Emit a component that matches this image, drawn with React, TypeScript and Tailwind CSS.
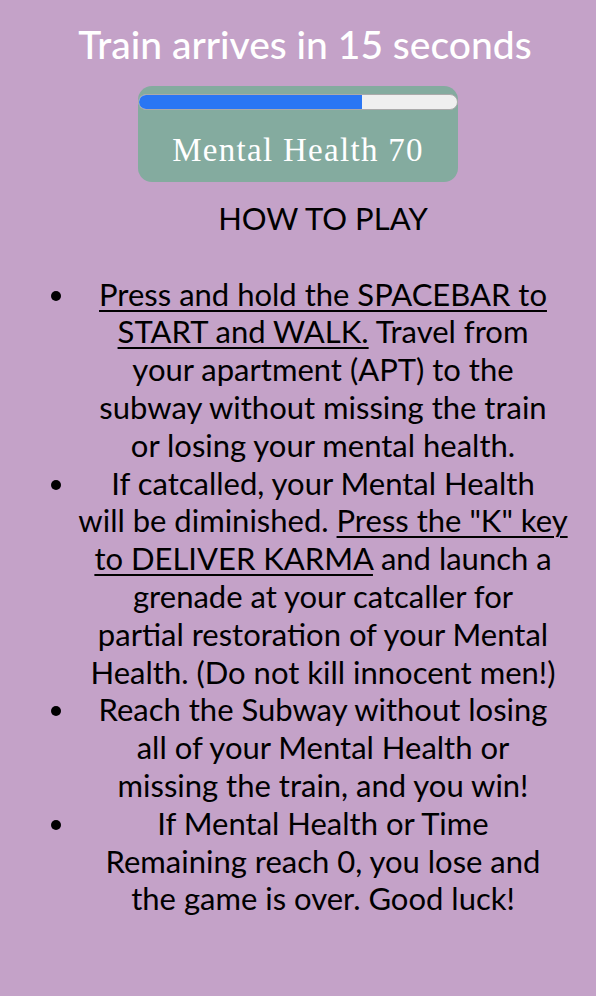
import React from 'react';

// line breaks follow the original game's layout
const rules = [
  {
    key: 'walk',
    content: (
      <>
        <u>
          Press and hold the SPACEBAR to
          <br />
          START and WALK.
        </u>{' '}
        Travel from
        <br />
        your apartment (APT) to the
        <br />
        subway without missing the train
        <br />
        or losing your mental health.
      </>
    ),
  },
  {
    key: 'karma',
    content: (
      <>
        If catcalled, your Mental Health
        <br />
        will be diminished.{' '}
        <u>
          Press the "K" key
          <br />
          to DELIVER KARMA
        </u>{' '}
        and launch a
        <br />
        grenade at your catcaller for
        <br />
        partial restoration of your Mental
        <br />
        Health. (Do not kill innocent men!)
      </>
    ),
  },
  {
    key: 'win',
    content: (
      <>
        Reach the Subway without losing
        <br />
        all of your Mental Health or
        <br />
        missing the train, and you win!
      </>
    ),
  },
  {
    key: 'lose',
    content: (
      <>
        If Mental Health or Time
        <br />
        Remaining reach 0, you lose and
        <br />
        the game is over. Good luck!
      </>
    ),
  },
];

const App = () => {
  const health = 70;

  return (
    <div className="min-h-[996px] w-full bg-[#c4a2c8] font-['Lato',sans-serif] text-black">
      {/* Timer */}
      <h1 className="pt-[19px] pl-[14px] text-center text-[39px] leading-[50px] font-medium text-white">
        Train arrives in 15 seconds
      </h1>

      {/* Mental health meter */}
      <div className="mx-auto mt-[17px] h-[96px] w-[320px] rounded-[14px] bg-[#84ab9f]">
        <div className="relative top-[8px] h-[16px] w-full overflow-hidden rounded-full border border-[#aaa] bg-[#efefef]">
          <div className="h-full bg-[#2a76f4]" style={{ width: `${health}%` }} />
        </div>
        <p className="mt-[28px] text-center font-['Liberation_Serif',serif] text-[33px] leading-[40px] tracking-[1.3px] text-white">
          Mental Health {health}
        </p>
      </div>

      {/* Instructions */}
      <div className="ml-[78px] w-[490px] text-center text-[31px] leading-[37.8px]">
        <h2 className="mt-[18px] mb-[37.8px]">HOW TO PLAY</h2>
        <ul className="list-disc">
          {rules.map((r) => (
            <li key={r.key} className="whitespace-nowrap [&_u]:decoration-2 [&_u]:underline-offset-4">
              {r.content}
            </li>
          ))}
        </ul>
      </div>
    </div>
  );
};

export default App;
